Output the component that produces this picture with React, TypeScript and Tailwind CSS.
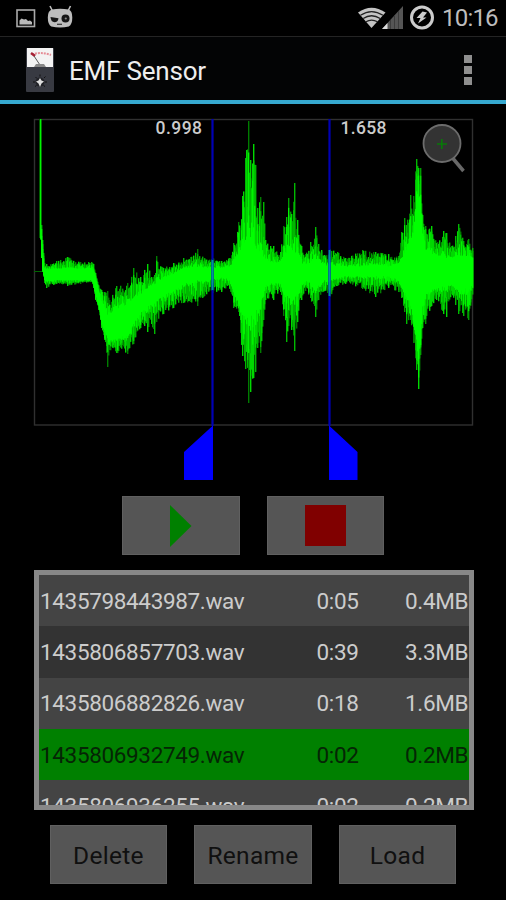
import { ReactNode } from 'react';

// [x, peak top, peak bottom, core top, core bottom]
const ENVELOPE = [
  [40, 119, 240, 119, 238],
  [41, 225, 258, 237, 258],
  [42, 240, 272, 250, 270],
  [44, 263, 283, 268, 280],
  [46, 264, 288, 269, 281],
  [56, 261, 284, 269, 280],
  [67, 257, 286, 268, 280],
  [80, 262, 284, 269, 280],
  [91, 262, 282, 268, 280],
  [93, 264, 288, 271, 283],
  [95, 273, 300, 277, 292],
  [98, 285, 310, 290, 305],
  [101, 290, 328, 302, 320],
  [104, 292, 340, 308, 330],
  [107, 291, 367, 315, 335],
  [109, 300, 350, 314, 340],
  [116, 286, 353, 310, 338],
  [127, 283, 354, 304, 334],
  [133, 268, 344, 300, 324],
  [140, 277, 328, 295, 312],
  [147, 264, 332, 290, 306],
  [151, 277, 324, 286, 303],
  [154, 275, 334, 285, 302],
  [156, 256, 322, 283, 300],
  [163, 268, 314, 279, 295],
  [173, 263, 308, 274, 290],
  [183, 258, 303, 269, 284],
  [190, 257, 302, 268, 282],
  [197, 249, 306, 267, 280],
  [204, 258, 296, 268, 280],
  [212, 258, 293, 268, 278],
  [221, 261, 292, 268, 277],
  [229, 258, 289, 267, 279],
  [233, 243, 308, 263, 291],
  [238, 222, 312, 255, 302],
  [242, 196, 356, 250, 311],
  [245, 158, 369, 246, 315],
  [248, 121, 403, 236, 318],
  [250, 160, 392, 240, 316],
  [253, 144, 378, 244, 314],
  [255, 165, 372, 250, 311],
  [257, 208, 348, 252, 307],
  [260, 197, 353, 254, 301],
  [263, 202, 320, 257, 293],
  [265, 240, 300, 262, 285],
  [273, 246, 300, 264, 282],
  [280, 252, 292, 263, 283],
  [283, 226, 316, 258, 288],
  [286, 217, 342, 253, 294],
  [288, 198, 326, 250, 297],
  [291, 214, 330, 250, 297],
  [294, 183, 351, 252, 296],
  [297, 220, 322, 255, 292],
  [301, 246, 300, 263, 284],
  [305, 254, 291, 265, 280],
  [310, 242, 298, 263, 283],
  [315, 227, 317, 259, 288],
  [318, 244, 300, 262, 285],
  [325, 256, 291, 266, 279],
  [329, 249, 297, 266, 279],
  [337, 252, 286, 266, 278],
  [345, 258, 284, 267, 276],
  [362, 250, 289, 267, 276],
  [375, 252, 297, 267, 276],
  [388, 254, 288, 267, 276],
  [398, 256, 292, 265, 279],
  [401, 232, 298, 260, 285],
  [404, 218, 312, 257, 290],
  [406, 225, 324, 252, 293],
  [410, 195, 320, 246, 302],
  [413, 196, 343, 236, 316],
  [416, 159, 370, 200, 338],
  [418, 168, 389, 198, 350],
  [420, 168, 355, 202, 342],
  [422, 215, 328, 238, 304],
  [425, 226, 324, 250, 294],
  [431, 226, 306, 254, 289],
  [436, 243, 300, 256, 287],
  [443, 231, 314, 257, 286],
  [446, 233, 317, 258, 286],
  [451, 246, 294, 259, 284],
  [455, 236, 305, 257, 286],
  [458, 224, 314, 255, 287],
  [463, 241, 316, 257, 288],
  [468, 239, 320, 256, 288],
  [473, 250, 292, 259, 284],
];

const GREENS = ['#007c00', '#009c00', '#00b800', '#00d800', '#00f400'];

function createRandom(seed: number) {
  let state = seed;
  return () => {
    state = (state * 1664525 + 1013904223) % 4294967296;
    return state / 4294967296;
  };
}

function buildBars() {
  const random = createRandom(20);
  const bars = [];
  for (let i = 0; i < ENVELOPE.length - 1; i++) {
    const from = ENVELOPE[i];
    const to = ENVELOPE[i + 1];
    for (let x = from[0]; x < to[0]; x++) {
      const t = (x - from[0]) / (to[0] - from[0]);
      const [top, bottom, coreTop, coreBottom] = [1, 2, 3, 4].map(
        (k) => from[k] + (to[k] - from[k]) * t,
      );
      const up = t === 0 ? 1 : 0.5 + 0.5 * random();
      const down = t === 0 ? 1 : 0.5 + 0.5 * random();
      const midUp = 0.35 + random() * 0.55;
      const midDown = 0.35 + random() * 0.55;
      const edge = x > 93 ? 0.25 : 0.1;
      bars.push({
        x,
        top: coreTop - (coreTop - top) * up,
        bottom: coreBottom + (bottom - coreBottom) * down,
        midTop: coreTop - (coreTop - top) * up * midUp,
        midBottom: coreBottom + (bottom - coreBottom) * down * midDown,
        coreTop: coreTop - (coreTop - top) * edge * random(),
        coreBottom: coreBottom + (bottom - coreBottom) * edge * random(),
        color: x === 40 ? '#009000' : GREENS[Math.floor(random() * 4)],
        midColor: GREENS[2 + Math.floor(random() * 3)],
      });
    }
  }
  return bars;
}

const BARS = buildBars();

const FILES = [
  { name: '1435798443987.wav', time: '0:05', size: '0.4MB' },
  { name: '1435806857703.wav', time: '0:39', size: '3.3MB' },
  { name: '1435806882826.wav', time: '0:18', size: '1.6MB' },
  { name: '1435806932749.wav', time: '0:02', size: '0.2MB', selected: true },
  { name: '1435806936255.wav', time: '0:02', size: '0.2MB' },
];

function StatusBar() {
  return (
    <header className="flex h-9 items-center justify-between">
      <svg className="h-9 w-20" viewBox="0 0 80 36">
        <rect x="17" y="10" width="17.5" height="16.5" fill="none" stroke="#aaa" strokeWidth="1.6" />
        <path d="M19.5 24.500v-4l2-2 2.500 1 2-.5 2 2 2-.5 2 1.500v2.500z" fill="#bbb" />
        <path d="M50 6l2.500 5M70.500 6l-2.500 5" stroke="#bbb" strokeWidth="1.600" />
        <path
          d="M52 9.500q8-1.500 16.500 0 3.800 1 3.800 8 0 7-3.500 9-8.500 2.200-17.500 0-3.500-2-3.500-9 0-7 4.200-8z"
          fill="#bdbdbd"
        />
        <circle cx="65.500" cy="18.500" r="4" fill="#161616" />
        <circle cx="65.800" cy="18.500" r="1.100" fill="#888" />
        <path d="M50.500 17l8 1.200q-.5 4-4 4-3.500 0-4-5.200z" fill="#161616" />
        <path d="M57 24.300h5" stroke="#333" strokeWidth="1.200" />
      </svg>
      <div className="flex items-center">
        <svg className="h-9 w-[84px]" viewBox="354 0 84 36">
          <path d="M358 12.500q13.500-9.500 27.500 0L371.500 28z" fill="#c4c4c4" />
          <path
            d="M360.500 15.300q11-7.500 22.500 0M363.200 18.500q8.300-5.500 17 0M366 21.800q5.500-3.500 11.500 0"
            fill="none"
            stroke="#222"
            strokeWidth="1.300"
          />
          <path d="M382 29l21-23v23z" fill="#555" />
          <path d="M382 29l5.500-6v6z" fill="#ddd" />
          <path d="M390.500 20v9M394.500 15v14M398.500 11v18" stroke="#3c3c3c" />
          <circle cx="422" cy="17.500" r="10.500" fill="none" stroke="#ccc" strokeWidth="3" />
          <path d="M422.500 11.500l-6 6.500h4l-2.500 5.500 8.500-6h-3.500l4-5z" fill="#ccc" />
        </svg>
        <span className="w-[68px] pl-1 text-[24px] leading-8 tracking-[-0.8px] text-[#bdbdbd]">10:16</span>
      </div>
    </header>
  );
}

function TitleBar() {
  return (
    <div className="flex h-17 items-center border-t border-t-[#242424] border-b-4 border-b-[#36a9d0] bg-[#030405] pr-[34px] pl-[26px]">
      <svg className="mt-0.5 h-[44px] w-7" viewBox="0 0 28 44">
        <rect width="28" height="44" rx="1" fill="#383a42" />
        <rect x="1" width="26" height="19" fill="#f3f3f3" />
        <path d="M6 6.500q9-3 19 .5" fill="none" stroke="#e58d96" strokeWidth="2" strokeDasharray="2 1" />
        <path d="M5 5l4 3" stroke="#a52034" strokeWidth="2.500" />
        <path d="M8 8l6 9" stroke="#555" />
        <path d="M8 19l2-3h8l2 3z" fill="#888" />
        <path
          d="M7 34h2M19 34h2M9.500 29l1.500 1.500M18 30l1.500-1.500M14 26.500v2M9 38.500l1.500-1M19 38.500l-1.500-1"
          stroke="#111"
        />
        <circle cx="14" cy="34" r="4.500" fill="#202126" />
        <path d="M14 30l1.500 2.500 2.500 1-2.500 2L14 39l-1.500-3.500-2.500-2 2.500-1z" fill="#ddd" />
      </svg>
      <h1 className="mt-[5px] ml-[15px] grow text-[26px] tracking-[-0.2px] text-[#eee]">EMF Sensor</h1>
      <div className="mt-0.5 flex w-2 flex-col gap-[3px]">
        <span className="h-2 bg-[#8f8f8f]" />
        <span className="h-2 bg-[#8f8f8f]" />
        <span className="h-2 bg-[#8f8f8f]" />
      </div>
    </div>
  );
}

function Waveform() {
  return (
    <svg className="block h-[392px] w-full" viewBox="0 104 506 392">
      <rect x="34.500" y="119.500" width="438" height="305.500" fill="none" stroke="#303030" strokeWidth="1.400" />
      <path d="M34 271.500h9" stroke="#006600" />
      {BARS.map((b) => (
        <rect key={b.x} x={b.x} y={b.top} width="1.400" height={b.bottom - b.top} fill={b.color} />
      ))}
      {BARS.map((b) => (
        <rect key={b.x} x={b.x} y={b.midTop} width="1.300" height={b.midBottom - b.midTop} fill={b.midColor} />
      ))}
      {BARS.slice(1).map((b) => (
        <rect
          key={b.x}
          x={b.x}
          y={b.coreTop}
          width="1.300"
          height={b.coreBottom - b.coreTop}
          fill="#00ff00"
        />
      ))}
      <path d="M39.500 119v119" stroke="#006000" />
      <path d="M212.500 119v307M329.500 119v307" stroke="#0000b4" strokeWidth="2.200" />
      <path d="M212.500 260v30M329.500 250v46" stroke="#0090a0" strokeWidth="1.800" />
      <path d="M213 425.500v54.500h-29v-28zM329 425.500v54.500h28.500v-28z" fill="#0000ff" />
      <g fill="#ccc" fontSize="17.500" fontWeight="500">
        <text x="155.500" y="133.500" textLength="46.500">0.998</text>
        <text x="340.500" y="133.500" textLength="46">1.658</text>
      </g>
      <path d="M453 158.500l10.500 12.500" stroke="#686868" strokeWidth="3.500" />
      <circle cx="442" cy="143.500" r="18.500" fill="#333" stroke="#6c6c6c" strokeWidth="1.800" />
      <path d="M441.800 139v10M437 144h10" stroke="#087808" strokeWidth="1.700" />
    </svg>
  );
}

function Button({ children }: { children: ReactNode }) {
  return (
    <button className="flex h-[59px] w-[117.500px] items-center justify-center border border-[#606060] bg-[#555] text-[24.500px] tracking-[0.3px] text-[#101010]">
      {children}
    </button>
  );
}

function FileList() {
  return (
    <ul className="mx-[34px] mt-[15px] h-[240px] w-[439.500px] overflow-hidden border-[5px] border-[#888] text-[22.500px] tracking-[-0.350px] text-[#ccc]">
      {FILES.map((file) => (
        <li
          key={file.name}
          className={
            file.selected
              ? 'flex h-[51.300px] items-center bg-[#008000] pt-0.5 pl-px text-[#052505]'
              : 'flex h-[51.300px] items-center bg-[#444] pt-0.5 pl-px even:bg-[#333]'
          }
        >
          <span className="w-[276.500px]">{file.name}</span>
          <span className="w-[88.500px]">{file.time}</span>
          <span className="whitespace-nowrap">{file.size}</span>
        </li>
      ))}
    </ul>
  );
}

export default function App() {
  return (
    <main className="h-[900px] w-[506px] overflow-hidden bg-black font-[Roboto,sans-serif]">
      <StatusBar />
      <TitleBar />
      <Waveform />
      <div className="flex justify-center gap-[27px]">
        <Button>
          <svg className="h-[42px] w-[22px]" viewBox="0 0 22 42">
            <path d="M0 0l21.500 21L0 42z" fill="#008000" />
          </svg>
        </Button>
        <Button>
          <span className="h-[41px] w-[41px] bg-[#800000]" />
        </Button>
      </div>
      <FileList />
      <div className="mt-[15px] flex justify-center gap-[27px]">
        <Button>
          <span className="pt-[3px]">Delete</span>
        </Button>
        <Button>
          <span className="pt-[3px]">Rename</span>
        </Button>
        <Button>
          <span className="pt-[3px]">Load</span>
        </Button>
      </div>
    </main>
  );
}
